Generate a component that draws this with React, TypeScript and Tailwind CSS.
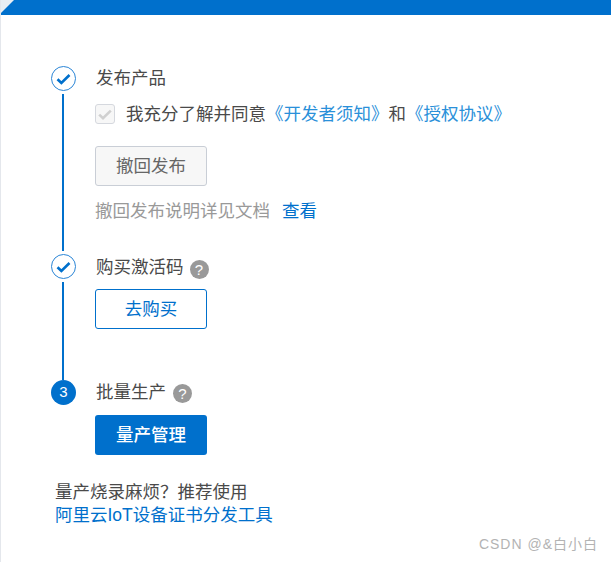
const FONT = "font-['Liberation_Sans','Noto_Sans_CJK_SC',sans-serif]";

function CheckCircle() {
  return (
    <div className="flex h-[25px] w-[25px] shrink-0 items-center justify-center rounded-full border border-[#2a85d6] bg-white">
      <svg width="15" height="12" viewBox="0 0 15 12" fill="none">
        <path d="M1.5 6.2 L5.4 10 L13.5 2" stroke="#0070cc" strokeWidth="2.6" />
      </svg>
    </div>
  );
}

function HelpIcon({ className }: { className: string }) {
  return (
    <span className={`flex h-[19px] w-[19px] items-center justify-center rounded-full bg-[#999999] text-[15px] leading-none text-white ${className}`}>
      ?
    </span>
  );
}

function Connector({ height }: { height: string }) {
  return <div className={`ml-[11px] w-[2px] self-start bg-[#0070cc] ${height}`} />;
}

export default function App() {
  return (
    <div className={`relative h-[562px] w-[611px] overflow-hidden border-l border-[#e4e7ec] bg-white ${FONT}`}>
      <div className="relative -ml-px h-[15px] w-[612px] bg-[#0070cc]">
        <svg className="absolute left-0 top-0" width="15" height="15" viewBox="0 0 15 15">
          <path d="M0 0 H14 L0 14 Z" fill="#e9eef3" />
        </svg>
      </div>

      <div className="ml-[50px] mt-[51px] flex">
        <div className="flex w-[25px] shrink-0 flex-col items-center">
          <CheckCircle />
          <div className="mt-[3px] self-start">
            <Connector height="h-[157px]" />
          </div>
          <div className="mt-[3px]">
            <CheckCircle />
          </div>
          <div className="mt-[3px] self-start">
            <Connector height="h-[98px]" />
          </div>
          <div className="flex h-[25px] w-[25px] items-center justify-center rounded-full bg-[#0070cc] text-[15px] text-white">
            3
          </div>
        </div>

        <div className="ml-[19px] flex flex-col text-[17.5px]">
          <div className="ml-px flex h-[24px] items-center text-[#4a4a4a]">发布产品</div>

          <div className="mt-[12px] flex h-[24px] items-center whitespace-nowrap text-[#4a4a4a]">
            <span className="flex h-[20px] w-[20px] items-center justify-center rounded-[3px] border border-[#d5d8de] bg-[#f7f7f7]">
              <svg width="14" height="11" viewBox="0 0 14 11" fill="none">
                <path d="M1.2 5.6 L5 9.2 L12.8 1.6" stroke="#d0d0d0" strokeWidth="2.6" />
              </svg>
            </span>
            <span className="ml-[11px]">我充分了解并同意</span>
            <a className="text-[#2a90d9]">《开发者须知》</a>
            <span>和</span>
            <a className="text-[#2a90d9]">《授权协议》</a>
          </div>

          <button className="mt-[20px] h-[40px] w-[112px] rounded-[3px] border border-[#c9ced6] bg-[#f7f7f7] text-[#666666]">
            撤回发布
          </button>

          <div className="mt-[13px] flex h-[24px] items-center whitespace-nowrap text-[#999999]">
            撤回发布说明详见文档
            <a className="ml-[12px] text-[#0070cc]">查看</a>
          </div>

          <div className="ml-px mt-[32px] flex h-[24px] items-center gap-[6px] text-[#4a4a4a]">
            购买激活码
            <HelpIcon className="mt-[5px]" />
          </div>

          <button className="mt-[10px] h-[40px] w-[112px] rounded-[3px] border border-[#0070cc] bg-white text-[#0070cc]">
            去购买
          </button>

          <div className="ml-px mt-[51px] flex h-[24px] items-center gap-[7px] text-[#4a4a4a]">
            批量生产
            <HelpIcon className="mt-[3px]" />
          </div>

          <button className="mt-[11px] h-[40px] w-[112px] rounded-[3px] bg-[#0070cc] font-medium text-white">
            量产管理
          </button>
        </div>
      </div>

      <div className="ml-[54px] mt-[26px] text-[17.5px] leading-[23px]">
        <div className="text-[#4a4a4a]">量产烧录麻烦？推荐使用</div>
        <a className="block text-[#0070cc]">阿里云IoT设备证书分发工具</a>
      </div>

      <div className="absolute right-[13px] top-[535px] text-[14px] leading-[18px] tracking-[1px] text-[#b3b3b3]">
        CSDN @&amp;白小白
      </div>
    </div>
  );
}
